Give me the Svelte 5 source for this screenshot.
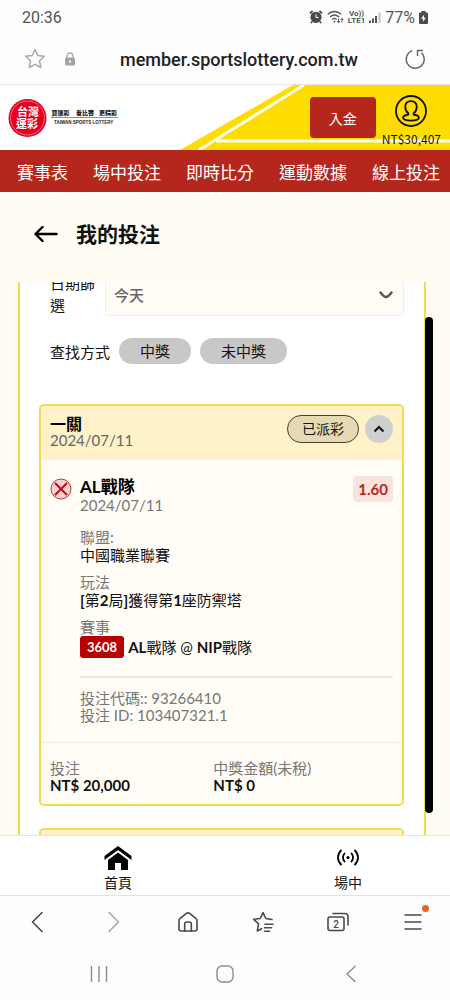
<script>
	import { onMount } from "svelte";

	const links = ["賽事表", "場中投注", "即時比分", "運動數據", "線上投注"];

	const bets = [
		{
			type: "一關",
			date: "2024/07/11",
			status: "已派彩",
			team: "AL戰隊",
			odds: "1.60",
			league: "中國職業聯賽",
			market: "[第2局]獲得第1座防禦塔",
			code: "3608",
			match: "AL戰隊 @ NIP戰隊",
			betCode: "93266410",
			betId: "103407321.1",
			stake: "NT$ 20,000",
			payout: "NT$ 0",
		},
		{
			type: "一關",
			date: "2024/07/11",
			status: "已派彩",
		},
	];

	let day = $state("今天");
	let closed = $state([false, true]);
	let list;

	// Open the list a little way down, past the panel's top edge
	onMount(() => {
		list.scrollTop = 26;
	});

	// Latin letters and digits are set bold, Chinese stays regular
	const runs = (text) => text.split(/([\[\]\w]+)/);
</script>

{#snippet mixed(text)}
	<span class="mixed">{#each runs(text) as run, i}{#if i % 2}<b>{run}</b>{:else}{run}{/if}{/each}</span>
{/snippet}

<div class="screen">
	<div class="status">
		<span>20:36</span>
		<div class="status-right">
			<svg width="14" height="14" viewBox="0 0 14 14">
				<circle cx="7" cy="7.3" r="5.6" fill="#4a4a4a" />
				<path d="M1 3.4 3.6 1M13 3.4 10.4 1M3 11.6 1.8 13M11 11.6l1.2 1.4" stroke="#4a4a4a" stroke-width="1.8" />
				<path d="M7 4.3v3.2h2.6" stroke="#fff" fill="none" />
			</svg>
			<svg width="17" height="14" viewBox="0 0 17 14" fill="none" stroke="#555" stroke-width="1.4">
				<path d="M.8 4.200C4.800.600 10.200.600 14.200 4.200M3 6.900c2.700-2.400 6.300-2.400 9 0M5.300 9.400c1.300-1.200 3.100-1.200 4.400 0" />
				<circle cx="7.500" cy="11.500" r="0.900" fill="#555" stroke="none" />
				<path d="M11.500 8.500v4M10 11l1.500 1.700L13 11M15 12.500v-4M13.600 10 15 8.400l1.400 1.600" stroke-width="1" />
			</svg>
			<span class="volte"><span>Vo))</span><span>LTE1</span></span>
			<svg width="12" height="13" viewBox="0 0 12 13">
				<path d="M0 9.500h2V12H0zM3 7.500h2V12H3zM6 5h2v7H6z" fill="#555" />
				<path d="M9.500 1.500h2V12h-2z" fill="#c4c4c4" />
			</svg>
			<span>77%</span>
			<svg width="9" height="13" viewBox="0 0 9 13">
				<path d="M2.500 0h4v1.500H8a1 1 0 0 1 1 1V12a1 1 0 0 1-1 1H1a1 1 0 0 1-1-1V2.500a1 1 0 0 1 1-1h1.500z" fill="#4a4a4a" />
				<path d="M5.200 3.500 2 7.700h2.200L3.700 11 7 6.800H4.800z" fill="#fff" />
			</svg>
		</div>
	</div>

	<div class="address">
		<button aria-label="加入書籤">
			<svg width="22" height="22" viewBox="0 0 22 22" fill="none" stroke="#a8a8a8" stroke-width="1.500" stroke-linejoin="round">
				<path d="m11 1.500 2.800 6 6.500.8-4.800 4.500 1.300 6.700-5.800-3.200-5.800 3.200 1.300-6.700L1.700 8.300l6.500-.8z" />
			</svg>
		</button>
		<svg class="lock" width="12" height="14" viewBox="0 0 12 14">
			<path d="M3 6V4a3 3 0 0 1 6 0v2" fill="none" stroke="#aaa" stroke-width="1.300" />
			<rect x="1" y="5.500" width="10" height="8" rx="1.500" fill="#a3a3a3" />
			<path d="M6 8v3" stroke="#fff" stroke-width="1.400" />
		</svg>
		<span class="url">member.sportslottery.com.tw</span>
		<button aria-label="重新整理">
			<svg width="22" height="22" viewBox="0 0 22 22" fill="none" stroke="#666" stroke-width="1.400">
				<path d="M8.200 2.700a9 9 0 1 0 9.300 2" />
				<path d="M13.500 8V2.500H19" />
			</svg>
		</button>
	</div>

	<header>
		<svg class="swoosh" width="270" height="65" viewBox="0 0 270 65">
			<path d="M0 65 113 0h157v65z" fill="#ffdc00" />
			<path d="M19 65 124 0M36 56h234" stroke="#fffef2" stroke-width="3" />
		</svg>
		<a class="logo" href="/" aria-label="台灣運彩">
			<svg width="112" height="40" viewBox="0 0 112 40">
				<circle cx="19.500" cy="20" r="19" fill="#e50021" />
				<circle cx="19.500" cy="20" r="17" fill="none" stroke="#f79aa6" stroke-width="0.700" />
				<g fill="#fff" font-size="11" font-weight="700" text-anchor="middle">
					<text x="20" y="18">台灣</text>
					<text x="19" y="30">運彩</text>
				</g>
				<g fill="#222">
					<g font-size="6" font-weight="900">
						<text x="43.500" y="17">買運彩</text>
						<text x="68" y="17">看比賽</text>
						<text x="91" y="17">更精彩</text>
					</g>
					<path d="M43 19.500h67v.6H43z" />
					<text x="46" y="26" font-family="Liberation Sans" font-size="4.500" font-weight="700">TAIWAN SPORTS LOTTERY</text>
				</g>
			</svg>
		</a>
		<button class="deposit">入金</button>
		<a class="account" href="/account">
			<svg width="34" height="34" viewBox="0 0 34 34" fill="none" stroke="#111" stroke-width="1.800">
				<circle cx="17" cy="17" r="15" />
				<path d="M14.300 19.200c-2-1.500-3-3.900-3-6.300 0-3.500 2.300-5.700 5.700-5.700s5.700 2.200 5.700 5.700c0 2.400-1 4.800-3 6.300v1.300c2.800.5 5.200 1.600 5.200 3.100 0 2-3.800 3-7.900 3s-7.900-1-7.900-3c0-1.500 2.400-2.600 5.200-3.100z" />
			</svg>
			<span>NT$30,407</span>
		</a>
	</header>

	<nav class="links">
		{#each links as link}
			<a href="/">{link}</a>
		{/each}
	</nav>

	<main>
		<div class="heading">
			<button aria-label="返回">
				<svg width="24" height="18" viewBox="0 0 24 18" fill="none" stroke="#000" stroke-width="2.400" stroke-linecap="round" stroke-linejoin="round">
					<path d="M22.500 9H2M8.500 2 1.500 9l7 7" />
				</svg>
			</button>
			<h1>我的投注</h1>
		</div>

		<div class="viewport">
			<div class="list" bind:this={list}>
				<div class="panel">
					<div class="filter">
						<label for="day">日期篩選</label>
						<div class="select">
							<select id="day" bind:value={day}>
								<option>今天</option>
								<option>昨天</option>
							</select>
							<svg width="14" height="8" viewBox="0 0 14 8" fill="none" stroke="#555" stroke-width="2.400" stroke-linecap="round">
								<path d="M1.500 1.500C3 3.500 5 6 7 6s4-2.500 5.500-4.500" />
							</svg>
						</div>
					</div>
					<div class="search">
						<span>查找方式</span>
						<button>中獎</button>
						<button>未中獎</button>
					</div>

					{#each bets as bet, i}
						<article class="card">
							<div class="card-head">
								<div class="card-title">
									<h2>{bet.type}</h2>
									<span>{bet.date}</span>
								</div>
								<span class="state">{bet.status}</span>
								<button class="toggle" aria-label="展開或收合" onclick={() => (closed[i] = !closed[i])}>
									<svg width="12" height="8" viewBox="0 0 12 8" fill="none" stroke="#111" stroke-width="2">
										<path d="m1.500 6.500 4.500-4.500 4.500 4.500" />
									</svg>
								</button>
							</div>
							{#if bet.team && !closed[i]}
								<div class="card-body">
									<svg class="lost" width="22" height="22" viewBox="0 0 22 22">
										<circle cx="11" cy="11" r="10" fill="#f8cfcc" stroke="#b5403f" />
										<path d="m5 5 12 12M17 5 5 17" stroke="#b00e14" stroke-width="1.800" />
									</svg>
									<div class="detail">
										<div class="pick">
											<div>
												<h3>{bet.team}</h3>
												<p class="muted">{bet.date}</p>
											</div>
											<span class="odds">{bet.odds}</span>
										</div>
										<dl>
											<dt>聯盟:</dt>
											<dd>{@render mixed(bet.league)}</dd>
											<dt>玩法</dt>
											<dd>{@render mixed(bet.market)}</dd>
											<dt>賽事</dt>
											<dd class="match"><span class="code">{bet.code}</span>{@render mixed(bet.match)}</dd>
										</dl>
										<div class="ids">
											<p>投注代碼:: {bet.betCode}</p>
											<p>投注 ID: {bet.betId}</p>
										</div>
									</div>
								</div>
								<dl class="totals">
									<div>
										<dt>投注</dt>
										<dd>{bet.stake}</dd>
									</div>
									<div>
										<dt>中獎金額(未稅)</dt>
										<dd>{bet.payout}</dd>
									</div>
								</dl>
							{/if}
						</article>
					{/each}
				</div>
			</div>
			<div class="thumb"></div>
		</div>
	</main>

	<nav class="tabs">
		<a href="/">
			<svg width="28" height="26" viewBox="0 0 28 26">
				<path d="M14 1 .5 11v4L14 5l13.500 10v-4z" />
				<path d="M14 7.500 4 15v10h7v-7h6v7h7V15z" />
			</svg>
			<span>首頁</span>
		</a>
		<a href="/live">
			<svg width="22" height="26" viewBox="0 0 22 26" fill="none" stroke="#000" stroke-width="1.800" stroke-linecap="round">
				<circle cx="11" cy="12.500" r="1.600" fill="#000" stroke="none" />
				<path d="M7.500 8.500c-2 2.200-2 5.800 0 8M14.500 8.500c2 2.200 2 5.800 0 8M4 5.500c-4 4-4 10 0 14M18 5.500c4 4 4 10 0 14" />
			</svg>
			<span>場中</span>
		</a>
	</nav>

	<div class="browser">
		<button aria-label="上一頁">
			<svg width="22" height="22" viewBox="0 0 22 22"><path d="M15 1.500 5.500 11l9.500 9.500" /></svg>
		</button>
		<button class="off" aria-label="下一頁">
			<svg width="22" height="22" viewBox="0 0 22 22"><path d="M7 1.500 16.500 11 7 20.500" /></svg>
		</button>
		<button aria-label="首頁">
			<svg width="22" height="22" viewBox="0 0 22 22">
				<path d="M2 9.500c0-.8.300-1.400.9-1.900l6.500-5.200c1-.7 2.200-.7 3.200 0l6.500 5.200c.6.500.9 1.100.9 1.900V18a2 2 0 0 1-2 2H4a2 2 0 0 1-2-2z" />
				<path d="M7.700 20v-7a2 2 0 0 1 2-2h2.600a2 2 0 0 1 2 2v7" />
			</svg>
		</button>
		<button aria-label="書籤">
			<svg width="22" height="22" viewBox="0 0 22 22">
				<path d="m20 8.500-6.200-1L11 1.700l-2.800 5.800-6.500.8 4.800 4.500L5.300 20l4.200-2.300M13 13.200h8M12.500 16.700h7M12.500 20.200h5" />
			</svg>
		</button>
		<button aria-label="分頁">
			<svg width="24" height="22" viewBox="0 0 24 22">
				<rect x="2" y="6" width="16" height="13.500" rx="2" />
				<path d="M7 2.500h12a3 3 0 0 1 3 3V14" />
				<text x="10" y="16.500" text-anchor="middle">2</text>
			</svg>
		</button>
		<button class="menu" aria-label="選單">
			<svg width="22" height="22" viewBox="0 0 22 22"><path d="M3 4h16M3 11h16M3 18h16" /></svg>
			<span class="dot"></span>
		</button>
	</div>

	<div class="system">
		<button aria-label="最近使用">
			<svg width="20" height="18" viewBox="0 0 20 18"><path d="M2.500 1v16M10 1v16M17.500 1v16" /></svg>
		</button>
		<button aria-label="主畫面">
			<svg width="18" height="18" viewBox="0 0 18 18"><rect x="1" y="1" width="16" height="16" rx="5" /></svg>
		</button>
		<button aria-label="返回">
			<svg width="18" height="18" viewBox="0 0 18 18"><path d="M13.500 1 5 9l8.500 8" /></svg>
		</button>
	</div>
</div>

<style>
	:global(body) {
		background: #fff;
	}
	.screen {
		display: flex;
		flex-direction: column;
		height: 100vh;
		font-family: Lato, "Noto Sans CJK TC", sans-serif;
		font-size: 15px;
		color: #111;
		background: #fdfdfd;
	}
	.screen * {
		box-sizing: border-box;
	}
	h1,
	h2,
	h3,
	p,
	dl,
	dd {
		margin: 0;
	}
	svg {
		display: block;
		flex: none;
	}
	button {
		border: 0;
		padding: 0;
		background: none;
		color: inherit;
		font: inherit;
		cursor: pointer;
	}
	a {
		color: inherit;
		text-decoration: none;
	}

	.status {
		display: flex;
		justify-content: space-between;
		align-items: center;
		height: 34px;
		padding: 0 22px;
		font-family: Roboto, sans-serif;
		font-size: 16px;
		color: #555;
	}
	.status-right {
		display: flex;
		align-items: center;
		gap: 4px;
	}
	.volte {
		display: flex;
		flex-direction: column;
		align-items: center;
		font-size: 8px;
		font-weight: 700;
		line-height: 7px;
	}
	.address {
		display: flex;
		align-items: center;
		height: 51px;
		padding: 0 24px;
		border-bottom: 1px solid #e8e8e8;
	}
	.lock {
		margin-left: 18px;
	}
	.url {
		flex: 1;
		padding-left: 44px;
		font-family: Roboto, sans-serif;
		font-size: 18px;
		font-weight: 500;
		color: #222;
	}

	header {
		position: relative;
		display: flex;
		align-items: center;
		height: 65px;
		padding: 0 9px 0 8px;
		background: #fff;
		font-family: "Noto Sans CJK TC", sans-serif;
	}
	.swoosh {
		position: absolute;
		top: 0;
		right: 0;
	}
	.logo {
		flex: 1;
	}
	.deposit {
		position: relative;
		width: 66px;
		height: 41px;
		border-radius: 4px;
		background: #b5271d;
		color: #fff;
		font-size: 14px;
	}
	.account {
		position: relative;
		display: flex;
		flex-direction: column;
		align-items: center;
		gap: 2px;
		margin: 7px 0 0 6px;
		font-size: 12px;
		line-height: 18px;
	}

	.links {
		display: flex;
		align-items: center;
		gap: 25px;
		height: 42px;
		padding-left: 17px;
		overflow: hidden;
		background: #b5271d;
		color: #fff;
		font-size: 17px;
		white-space: nowrap;
	}

	main {
		display: flex;
		flex: 1;
		flex-direction: column;
		min-height: 0;
		background: #fffdf3;
	}
	.heading {
		display: flex;
		align-items: center;
		gap: 18px;
		height: 90px;
		padding: 0 34px 6px;
	}
	h1 {
		font-size: 21px;
		line-height: 32px;
	}
	.viewport {
		position: relative;
		flex: 1;
		min-height: 0;
	}
	.list {
		height: 100%;
		overflow-y: auto;
		scrollbar-width: none;
	}
	.thumb {
		position: absolute;
		top: 35px;
		right: 17px;
		bottom: 22px;
		width: 8px;
		border-radius: 4px;
		background: #000;
	}
	.panel {
		margin: 0 24px 0 18px;
		padding: 14px 20px 20px 19px;
		border: 2px solid #f3dc4b;
		border-radius: 8px;
		background: #fff;
	}
	.filter {
		display: flex;
		align-items: center;
		gap: 8px;
		padding-left: 11px;
	}
	.filter label {
		width: 47px;
		line-height: 22px;
	}
	.select {
		position: relative;
		flex: 1;
	}
	.select svg {
		position: absolute;
		top: 19px;
		right: 11px;
		pointer-events: none;
	}
	select {
		width: 100%;
		height: 44px;
		padding: 0 8px;
		border: 1px solid #eee;
		border-radius: 4px;
		appearance: none;
		background: #fffdf5;
		color: #666;
		font: 500 15px "Noto Sans CJK TC", sans-serif;
	}
	.search {
		display: flex;
		align-items: center;
		gap: 9px;
		padding: 22px 0 40px 11px;
	}
	.search button {
		height: 26px;
		padding: 0 21px;
		border-radius: 13px;
		background: #c8c8c8;
		line-height: 26px;
	}

	.card {
		margin-bottom: 22px;
		overflow: hidden;
		border: 2px solid #f0dc50;
		border-radius: 5px;
		background: #fffdf5;
	}
	.card-head {
		display: flex;
		align-items: flex-start;
		gap: 6px;
		height: 54px;
		padding: 9px 9px 0;
		background: #fff1c8;
	}
	.card-title {
		flex: 1;
		line-height: 17px;
		color: #666;
	}
	h2 {
		font-size: 16px;
		line-height: 17px;
		color: #000;
	}
	.state {
		padding: 0 14px;
		border: 1px solid #443f30;
		border-radius: 14px;
		background: #e5dab4;
		font-size: 14px;
		line-height: 26px;
	}
	.toggle {
		display: flex;
		align-items: center;
		justify-content: center;
		width: 28px;
		height: 28px;
		border-radius: 50%;
		background: #cfcfcf;
	}
	.card-body {
		display: flex;
		gap: 8px;
		padding: 16px 9px 18px;
		border-bottom: 1px solid #ecebe4;
	}
	.lost {
		margin-top: 2px;
	}
	.detail {
		flex: 1;
	}
	.pick {
		display: flex;
		justify-content: space-between;
		margin-bottom: 15px;
	}
	h3 {
		font-size: 17px;
		line-height: 21px;
		color: #000;
	}
	.muted {
		line-height: 16px;
		color: #777;
	}
	.odds {
		align-self: flex-start;
		padding: 0 5px;
		border-radius: 4px;
		background: #f9e3dd;
		color: #b5271d;
		font-size: 15px;
		font-weight: 700;
		line-height: 26px;
	}
	dt {
		line-height: 18px;
		color: #777;
	}
	dd {
		line-height: 18px;
	}
	dd + dt {
		margin-top: 9px;
	}
	.mixed {
		white-space: pre-wrap;
	}
	.match {
		display: flex;
		align-items: center;
		gap: 4px;
		line-height: 22px;
	}
	.code {
		padding: 0 7px;
		border-radius: 3px;
		background: #b80000;
		color: #fff;
		font-size: 13px;
		font-weight: 700;
	}
	.ids {
		margin-top: 18px;
		padding-top: 12px;
		border-top: 2px solid #e9e8e2;
		line-height: 17px;
		color: #777;
	}
	.totals {
		display: grid;
		grid-template-columns: 10fr 11fr;
		padding: 17px 9px 10px;
	}
	.totals dt,
	.totals dd {
		line-height: 17px;
	}
	.totals dd {
		font-weight: 700;
	}

	.tabs {
		display: grid;
		grid-template-columns: 1fr 1fr;
		column-gap: 26px;
		height: 60px;
		padding: 9px 0 0 16px;
		border-top: 1px solid #e6e4dc;
		background: #fff;
		font-size: 14px;
		line-height: 24px;
	}
	.tabs a {
		display: flex;
		flex-direction: column;
		align-items: center;
	}
	.browser {
		display: grid;
		grid-template-columns: repeat(6, 1fr);
		height: 53px;
		border-top: 1px solid #e2e2e2;
	}
	.browser button,
	.system button {
		display: flex;
		align-items: center;
		justify-content: center;
	}
	.browser svg {
		fill: none;
		stroke: #4a4a4a;
		stroke-width: 1.6;
		stroke-linecap: round;
		stroke-linejoin: round;
	}
	.browser .off svg {
		stroke: #aaa;
	}
	.browser text {
		fill: #4a4a4a;
		stroke: none;
		font: 500 10px Roboto, sans-serif;
	}
	.menu {
		position: relative;
	}
	.dot {
		position: absolute;
		top: 9px;
		right: 21px;
		width: 7px;
		height: 7px;
		border-radius: 50%;
		background: #e8622c;
	}
	.system {
		display: grid;
		grid-template-columns: repeat(3, 1fr);
		height: 52px;
		padding: 0 36px;
	}
	.system svg {
		fill: none;
		stroke: #8c8c8c;
		stroke-width: 1.4;
	}
</style>
